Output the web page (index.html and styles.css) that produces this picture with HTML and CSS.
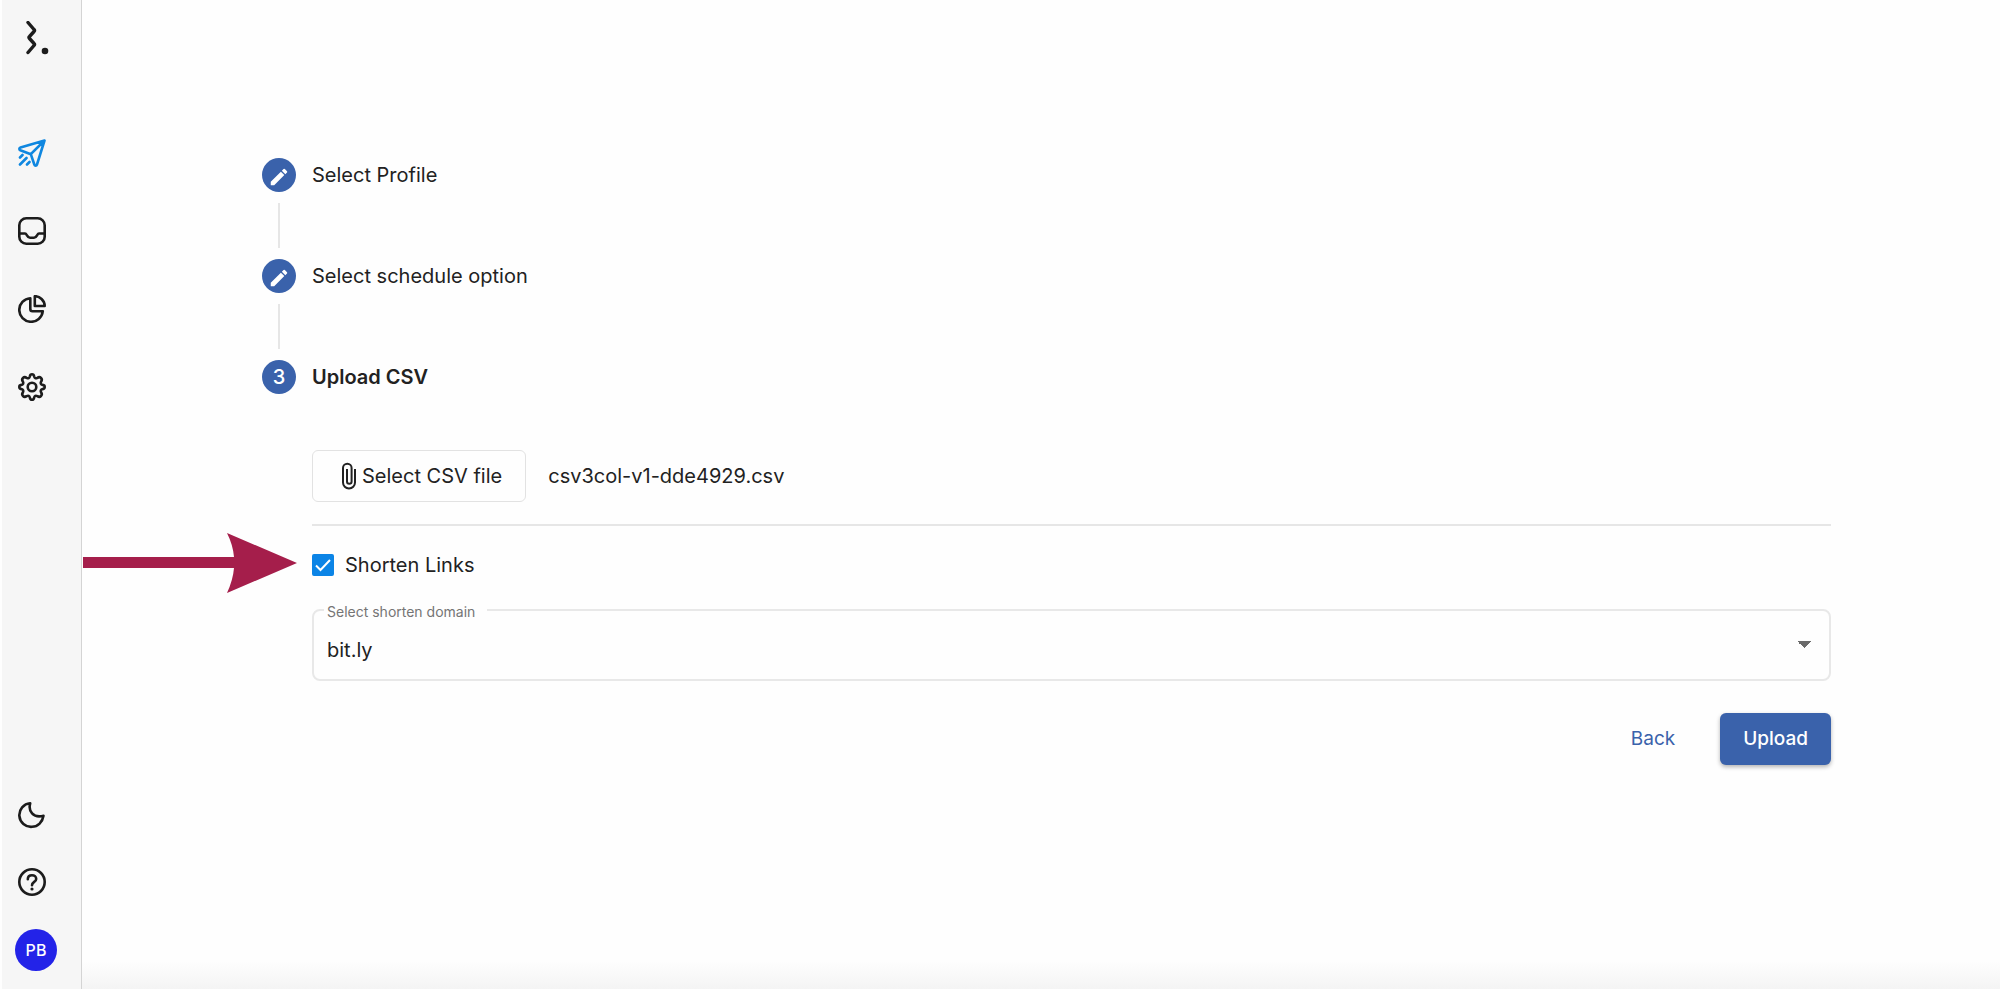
FILE: index.html
```html
<!DOCTYPE html>
<html lang="en">
  <head>
    <meta charset="UTF-8" />
    <meta name="viewport" content="width=device-width, initial-scale=1.0" />
    <title>Upload CSV</title>
    <link rel="stylesheet" href="styles.css">
  </head>
  <body>
    <aside class="sidebar">
      <a class="logo" href="#" aria-label="Home">
        <svg width="24" height="34" viewBox="0 0 24 34">
          <path d="M2 1.500 8 8.500Q9 9.500 8 10.500L3.500 15.500Q2.500 16.500 3.500 17.500L8 22.500Q9 23.500 8 24.500L2 31.500" fill="none" stroke="currentColor" stroke-width="3.400" stroke-linejoin="round" stroke-linecap="round" />
          <circle cx="19" cy="30" r="3.300" fill="currentColor" />
        </svg>
      </a>

      <nav class="menu">
        <a class="active" href="#" aria-label="Campaigns">
          <svg class="icon" viewBox="0 0 28 28">
            <path d="M26.500 1.500 2.500 8.500C1 9 1 10.600 2.300 11.200L12.800 15.200 16.300 25.500C16.800 27 18.500 27 19 25.500ZM12.800 15.200 26 2M2 18.500 4.500 16M2 25.500 8.500 19M9 25.500 11.500 23" />
          </svg>
        </a>
        <a href="#" aria-label="Inbox">
          <svg class="icon" viewBox="0 0 28 28">
            <rect x="1.300" y="1.300" width="25.400" height="25.400" rx="7" />
            <path d="M1.500 16.500H7C9 16.500 9 20.800 12 20.800H16C19 20.800 19 16.500 21 16.500H26.500" />
          </svg>
        </a>
        <a href="#" aria-label="Reports">
          <svg class="icon" viewBox="0 0 28 28">
            <path d="M12.300 3.200A11.800 11.800 0 1 0 24.800 16.200H14.500C13 16.200 12.300 15.500 12.300 14ZM16.800 1.200C21.800 1.200 26.600 5.500 26.700 11H16.800Z" />
          </svg>
        </a>
        <a href="#" aria-label="Settings">
          <svg class="icon" viewBox="0 0 28 28">
            <path d="M11.900 3.300Q12.200 1.300 14 1.300T16.100 3.300Q16.800 6.200 19.400 4.900 21.400 3.400 23 5T23.100 8.600Q21.800 11.200 24.700 11.900 26.700 12.200 26.700 14T24.700 16.100Q21.800 16.800 23.100 19.400 24.600 21.400 23 23T19.400 23.100Q16.800 21.800 16.100 24.700 15.800 26.700 14 26.700T11.900 24.700Q11.200 21.800 8.600 23.100 6.600 24.600 5 23T4.900 19.400Q6.200 16.800 3.300 16.100 1.300 15.800 1.300 14T3.300 11.900Q6.200 11.200 4.900 8.600 3.400 6.600 5 5T8.600 4.900Q11.200 6.200 11.900 3.300Z" />
            <circle cx="14" cy="14" r="4.300" />
          </svg>
        </a>
      </nav>

      <div class="tools">
        <button type="button" aria-label="Dark mode">
          <svg class="icon" viewBox="0 0 28 28">
            <path d="M12.200 2.300C10 10 15 17.500 25.500 14.800 24.500 21 20 25.800 14 25.800A11.700 11.700 0 0 1 12.200 2.300Z" />
          </svg>
        </button>
        <button type="button" aria-label="Help">
          <svg class="icon" viewBox="0 0 28 28">
            <circle cx="14" cy="14" r="12.700" />
            <path d="M9.800 11.200C9.800 8.500 11.600 7.200 14 7.200S18.200 8.800 18.200 10.900C18.200 14 14 13.800 14 17.300" />
            <circle class="dot" cx="14" cy="21" r="1.600" />
          </svg>
        </button>
        <button type="button" class="avatar">PB</button>
      </div>
    </aside>

    <main class="content">
      <ol class="stepper">
        <li class="step">
          <span class="badge">
            <svg width="22" height="22" viewBox="0 0 24 24"><path d="M3 17.250V21h3.750L17.810 9.940l-3.750-3.750L3 17.250zM20.710 7.040a1 1 0 0 0 0-1.410l-2.340-2.340a1 1 0 0 0-1.410 0l-1.830 1.830 3.750 3.750 1.830-1.830z" /></svg>
          </span>
          <span>Select Profile</span>
        </li>
        <li class="step">
          <span class="badge">
            <svg width="22" height="22" viewBox="0 0 24 24"><path d="M3 17.250V21h3.750L17.810 9.940l-3.750-3.750L3 17.250zM20.710 7.040a1 1 0 0 0 0-1.410l-2.340-2.340a1 1 0 0 0-1.410 0l-1.830 1.830 3.750 3.750 1.830-1.830z" /></svg>
          </span>
          <span>Select schedule option</span>
        </li>
        <li class="step current">
          <span class="badge">3</span>
          <span>Upload CSV</span>
        </li>
      </ol>

      <form class="panel">
        <div class="file-row">
          <button type="button" class="btn btn-outline">
            <svg width="16" height="28" viewBox="0 0 16 28">
              <path d="M14 7V20.500A6 6 0 0 1 2 20.500V6A4.300 4.300 0 0 1 10.600 6V19.500A2.300 2.300 0 0 1 6 19.500V7" fill="none" stroke="currentColor" stroke-width="2" />
            </svg>
            Select CSV file
          </button>
          <span>csv3col-v1-dde4929.csv</span>
        </div>

        <div class="shorten-row">
          <svg class="arrow" width="214" height="60" viewBox="0 0 214 60">
            <path d="M0 24H151Q150 12 144 0L214 30 144 60Q150 47 151 35H0Z" />
          </svg>
          <input type="checkbox" id="shorten" checked />
          <label for="shorten">Shorten Links</label>
        </div>

        <fieldset class="field">
          <legend><label for="domain">Select shorten domain</label></legend>
          <select id="domain">
            <option>bit.ly</option>
          </select>
        </fieldset>

        <div class="actions">
          <button type="button" class="btn btn-text">Back</button>
          <button type="button" class="btn btn-primary">Upload</button>
        </div>
      </form>
    </main>
  </body>
</html>
```
FILE: styles.css
```css
* {
  box-sizing: border-box;
}

body {
  display: flex;
  min-height: 100vh;
  margin: 0;
  background: #fefefe;
  color: #222;
  font-family: Inter, 'Liberation Sans', sans-serif;
  font-size: 20px;
  line-height: 28px;
}

button,
select {
  font: inherit;
  color: inherit;
}

button {
  cursor: pointer;
}

/* Sidebar */
.sidebar {
  display: flex;
  flex-direction: column;
  width: 82px;
  padding: 21px 0 18px 18px;
  background: linear-gradient(to right, #fefefe 2px, #f6f6f6 2px);
  border-right: 1px solid #d4d4d4;
}

.sidebar a,
.sidebar button {
  display: block;
  color: #1c1c1c;
}

.sidebar svg {
  display: block;
}

.logo {
  padding-left: 8px;
}

.menu {
  display: flex;
  flex-direction: column;
  gap: 50px;
  margin-top: 84px;
}

.menu .active {
  color: #0f87e0;
}

.icon {
  width: 28px;
  height: 28px;
  fill: none;
  stroke: currentColor;
  stroke-width: 2.6;
  stroke-linecap: round;
  stroke-linejoin: round;
}

.icon .dot {
  fill: currentColor;
  stroke: none;
}

.tools {
  display: flex;
  flex-direction: column;
  align-items: flex-start;
  gap: 39px;
  margin-top: auto;
}

.tools button {
  padding: 0;
  border: 0;
  background: none;
}

.tools .avatar {
  width: 42px;
  height: 42px;
  margin: -6px 0 0 -3px;
  border-radius: 50%;
  background: #2323e8;
  color: #fff;
  font-size: 16px;
  font-weight: 500;
}

/* Content */
.content {
  flex: 1;
  padding: 158px 169px 40px 180px;
  background: linear-gradient(to top, #f4f4f4, #fefefe 28px);
}

.stepper {
  margin: 0;
  padding: 0;
  list-style: none;
}

.step {
  display: flex;
  align-items: flex-end;
  gap: 16px;
  line-height: 34px;
}

/* connector between two steps */
.step + .step::before {
  content: '';
  width: 2px;
  height: 45px;
  margin: 11px -34px 45px 16px;
  background: #e6e6e6;
}

.badge {
  display: flex;
  flex: none;
  align-items: center;
  justify-content: center;
  width: 34px;
  height: 34px;
  border-radius: 50%;
  background: #3a62ab;
  color: #fff;
}

.badge svg {
  margin-top: 4px;
  fill: currentColor;
}

.current {
  font-weight: 600;
}

.current .badge {
  font-weight: 500;
}

.panel {
  padding: 56px 0 0 50px;
}

.btn {
  display: flex;
  align-items: center;
  height: 52px;
  padding: 0 22px;
  border: 1px solid transparent;
  border-radius: 6px;
  background: none;
}

.btn-outline {
  gap: 5px;
  padding: 0 23px 0 28px;
  border-color: #e2e2e2;
}

.btn-text,
.btn-primary {
  font-size: 19px;
}

.btn-text {
  color: #3a62ab;
}

.btn-primary {
  background: #3a62ab;
  color: #fff;
  font-weight: 500;
  box-shadow: 0 2px 4px rgba(0, 0, 0, 0.3);
}

.file-row {
  display: flex;
  align-items: center;
  gap: 22px;
  padding-bottom: 22px;
  border-bottom: 2px solid #e6e6e6;
}

.shorten-row {
  position: relative;
  display: flex;
  align-items: center;
  gap: 11px;
  margin: 25px 0 20px;
}

.shorten-row input {
  appearance: none;
  width: 22px;
  height: 22px;
  margin: 0;
  border: 2px solid #888;
  border-radius: 2px;
}

.shorten-row input:checked {
  border-color: #0b84e6;
  background: #0b84e6 url("data:image/svg+xml,%3Csvg xmlns='http://www.w3.org/2000/svg' viewBox='0 0 18 18'%3E%3Cpath d='M2 9.500 6.500 14 16 4' fill='none' stroke='white' stroke-width='2'/%3E%3C/svg%3E") center no-repeat;
}

/* callout pointing at the checkbox */
.arrow {
  position: absolute;
  right: calc(100% + 15px);
  bottom: -14px;
  fill: #a51e4b;
}

.field {
  min-width: 0;
  margin: 0;
  padding: 0 10px;
  border: 2px solid #e8e8e8;
  border-radius: 8px;
}

.field legend {
  padding: 4px 12px 0 3px;
  color: #757575;
  font-size: 14px;
  line-height: 18px;
}

.field select {
  display: block;
  appearance: none;
  width: 100%;
  height: 58px;
  padding: 0 3px;
  border: 0;
  background: linear-gradient(to bottom left, #6b6b6b 50%, transparent 50%) right 15px top 20px / 7px 7px no-repeat,
    linear-gradient(to bottom right, #6b6b6b 50%, transparent 50%) right 8px top 20px / 7px 7px no-repeat;
}

.actions {
  display: flex;
  justify-content: flex-end;
  gap: 22px;
  margin-top: 32px;
}
```
